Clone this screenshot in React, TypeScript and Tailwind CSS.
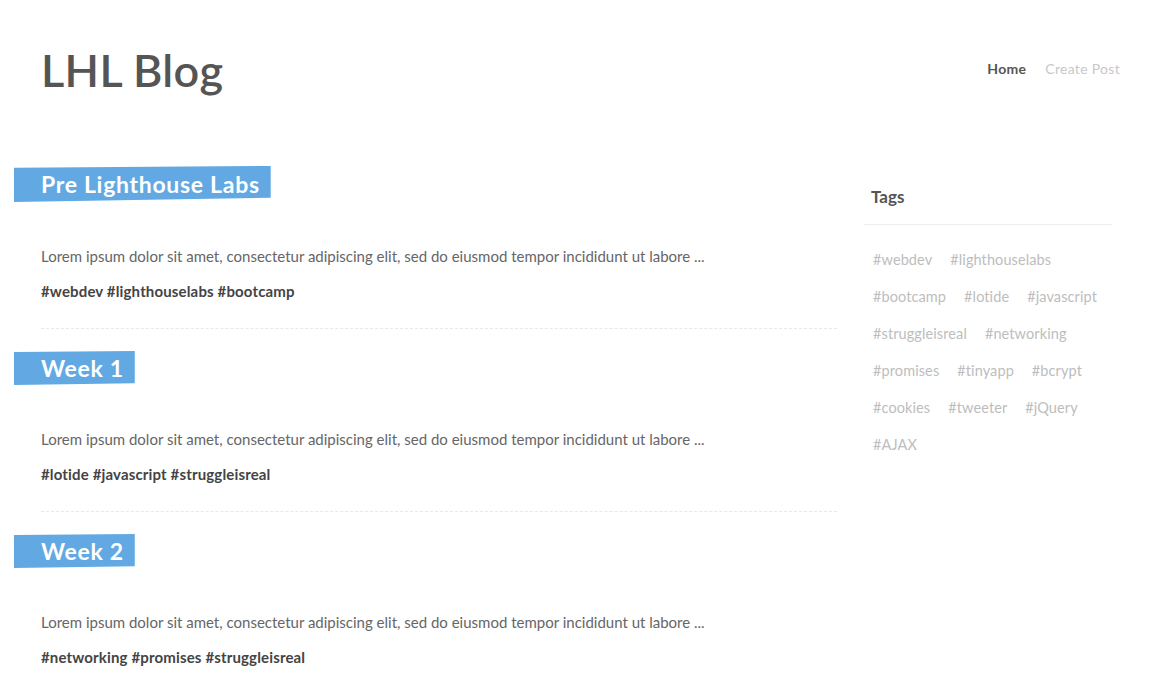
import React from "react";

const posts = [
  { title: "Pre Lighthouse Labs", tags: "#webdev #lighthouselabs #bootcamp" },
  { title: "Week 1", tags: "#lotide #javascript #struggleisreal" },
  { title: "Week 2", tags: "#networking #promises #struggleisreal" },
];

const sideTags = [
  ["#webdev", "#lighthouselabs"],
  ["#bootcamp", "#lotide", "#javascript"],
  ["#struggleisreal", "#networking"],
  ["#promises", "#tinyapp", "#bcrypt"],
  ["#cookies", "#tweeter", "#jQuery"],
  ["#AJAX"],
];

export default function App() {
  return (
    <div
      className="w-[1154px] h-[674px] overflow-hidden bg-white"
      style={{ fontFamily: "Lato, 'Noto Sans', sans-serif" }}
    >
      <header className="flex justify-between items-start pl-[41px] pr-[34px] pt-[44px]">
        <h1 className="text-[45px] leading-[52px] font-semibold text-[#555555] tracking-[0.3px]">
          LHL Blog
        </h1>
        <nav className="flex gap-[19px] text-[14px] leading-[20px] mt-[15px] tracking-[0.3px]">
          <span className="font-bold text-[#555555]">Home</span>
          <span className="text-[#c8c8c8]">Create Post</span>
        </nav>
      </header>

      <main className="flex mt-[70px]">
        <div className="ml-[41px] w-[796px]">
          {posts.map((p, i) => (
            <article
              key={p.title}
              className={i < posts.length - 1 ? "border-b border-dashed border-[#e8e8e8] pb-[27px] mb-[22px]" : ""}
            >
              <div
                className={
                  "-ml-[27px] inline-block bg-[#62a9e3] pl-[27px] pr-[11px] text-white text-[23px] font-bold tracking-[0.7px] " +
                  (i === 0
                    ? "h-[36px] leading-[36px] [clip-path:polygon(0_5%,100%_0,100%_88%,0_100%)]"
                    : "h-[34px] leading-[34px] [clip-path:polygon(0_3%,100%_0,100%_95%,0_100%)]")
                }
              >
                {p.title}
              </div>
              <p className="mt-[44px] text-[15px] leading-[20px] text-[#666666]">
                Lorem ipsum dolor sit amet, consectetur adipiscing elit, sed do eiusmod tempor incididunt ut labore ...
              </p>
              <p className="mt-[15px] text-[15px] leading-[20px] tracking-[0.15px] font-bold text-[#444444]">
                {p.tags}
              </p>
            </article>
          ))}
        </div>

        <aside className="ml-[27px] w-[248px]">
          <div className="mt-[19px] pl-[7px] pb-[15px] border-b border-[#eeeeee] text-[17px] leading-[24px] font-bold text-[#555555]">
            Tags
          </div>
          <div className="mt-[16px] pl-[9px]">
            {sideTags.map((row, r) => (
              <div
                key={r}
                className="flex gap-[18px] text-[14.5px] leading-[37px] tracking-[0.1px] text-[#bdbdbd]"
              >
                {row.map((t) => (
                  <span key={t}>{t}</span>
                ))}
              </div>
            ))}
          </div>
        </aside>
      </main>
    </div>
  );
}
